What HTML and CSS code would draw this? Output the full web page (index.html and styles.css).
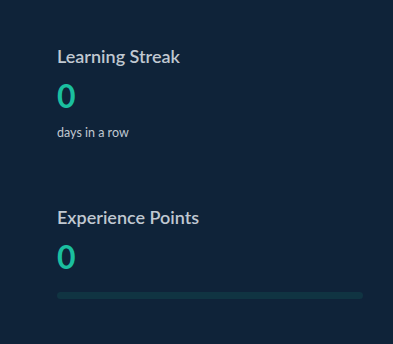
FILE: index.html
```html
<!DOCTYPE html>
<html lang="en">

<head>
    <meta charset="UTF-8">
    <meta name="viewport" content="width=device-width, initial-scale=1.0">
    <title>Progress</title>
    <link rel="stylesheet" href="styles.css">
</head>

<body>
    <!-- Stats -->
    <main class="stats">
        <section class="stat">
            <h2 class="stat-title">Learning Streak</h2>
            <div class="stat-value">0</div>
            <p class="stat-note">days in a row</p>
        </section>

        <section class="stat">
            <h2 class="stat-title">Experience Points</h2>
            <div class="stat-value">0</div>
            <div class="xp-bar">
                <div class="xp-fill" style="width: 0%"></div>
            </div>
        </section>
    </main>
</body>

</html>
```

FILE: styles.css
```css
body {
    margin: 0;
    font-family: 'Lato', 'Noto Sans', sans-serif;
    background-color: #0f2339;
    min-height: 344px;
}

.stats {
    padding: 44px 30px 0 57px;
    display: flex;
    flex-direction: column;
    gap: 64px;
}

.stat-title {
    margin: 0;
    font-size: 18px;
    font-weight: 600;
    line-height: 24px;
    color: #c0c8d1;
}

.stat-value {
    margin-top: 11px;
    font-size: 32px;
    font-weight: 700;
    line-height: 34px;
    color: #1bbf9f;
}

.stat-note {
    margin: 12px 0 0;
    font-size: 12.5px;
    line-height: 16px;
    color: #c0c8d1;
}

.xp-bar {
    margin-top: 18px;
    height: 7px;
    border-radius: 4px;
    background: #103442;
    overflow: hidden;
}

.xp-fill {
    height: 100%;
    background: #1bbf9f;
}
```
